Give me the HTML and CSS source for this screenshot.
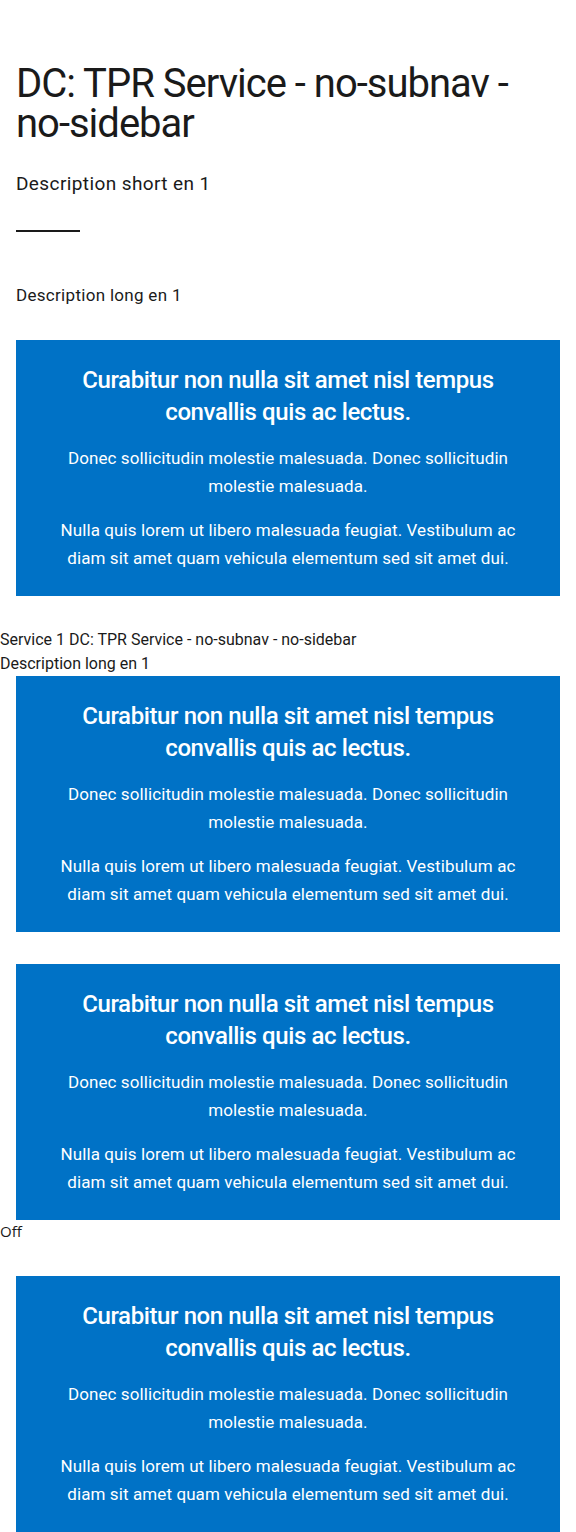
FILE: index.html
```html
<!DOCTYPE html>
<html lang="en">
<head>
<meta charset="utf-8">
<title>DC: TPR Service - no-subnav - no-sidebar</title>
<link rel="stylesheet" href="styles.css">
</head>
<body>
<main class="page">
  <header class="intro">
    <h1 class="title">DC: TPR Service - no-subnav - no-sidebar</h1>
    <p class="lead">Description short en 1</p>
    <hr class="rule">
    <p class="long">Description long en 1</p>
  </header>

  <section class="cta-wrap">
    <div class="cta">
      <h2 class="cta-title">Curabitur non nulla sit amet nisl tempus convallis quis ac lectus.</h2>
      <p class="cta-text">Donec sollicitudin molestie malesuada. Donec sollicitudin molestie malesuada.</p>
      <p class="cta-text">Nulla quis lorem ut libero malesuada feugiat. Vestibulum ac diam sit amet quam vehicula elementum sed sit amet dui.</p>
    </div>
  </section>

  <div class="raw">
    <div class="raw-line">Service 1 DC: TPR Service - no-subnav - no-sidebar</div>
    <div class="raw-line">Description long en 1</div>
  </div>

  <section class="cta-wrap flush">
    <div class="cta">
      <h2 class="cta-title">Curabitur non nulla sit amet nisl tempus convallis quis ac lectus.</h2>
      <p class="cta-text">Donec sollicitudin molestie malesuada. Donec sollicitudin molestie malesuada.</p>
      <p class="cta-text">Nulla quis lorem ut libero malesuada feugiat. Vestibulum ac diam sit amet quam vehicula elementum sed sit amet dui.</p>
    </div>
  </section>

  <section class="cta-wrap">
    <div class="cta">
      <h2 class="cta-title">Curabitur non nulla sit amet nisl tempus convallis quis ac lectus.</h2>
      <p class="cta-text">Donec sollicitudin molestie malesuada. Donec sollicitudin molestie malesuada.</p>
      <p class="cta-text">Nulla quis lorem ut libero malesuada feugiat. Vestibulum ac diam sit amet quam vehicula elementum sed sit amet dui.</p>
    </div>
  </section>

  <div class="off">Off</div>

  <section class="cta-wrap">
    <div class="cta">
      <h2 class="cta-title">Curabitur non nulla sit amet nisl tempus convallis quis ac lectus.</h2>
      <p class="cta-text">Donec sollicitudin molestie malesuada. Donec sollicitudin molestie malesuada.</p>
      <p class="cta-text">Nulla quis lorem ut libero malesuada feugiat. Vestibulum ac diam sit amet quam vehicula elementum sed sit amet dui.</p>
    </div>
  </section>
</main>
</body>
</html>
```

FILE: styles.css
```css
html, body {
  margin: 0;
  padding: 0;
  background: #ffffff;
}

body {
  font-family: Roboto, "Liberation Sans", Arial, sans-serif;
  color: #1a1a1a;
}

.page {
  display: block;
}

.intro {
  padding: 64px 16px 0;
}

.title {
  margin: 0;
  font-size: 40px;
  line-height: 40px;
  font-weight: 400;
  letter-spacing: -1px;
}

.lead {
  margin: 28px 0 0;
  font-size: 19px;
  line-height: 24px;
  letter-spacing: 0.4px;
}

.rule {
  width: 64px;
  height: 2px;
  margin: 34px 0 0;
  border: 0;
  background: #1a1a1a;
}

.long {
  margin: 51px 0 0;
  font-size: 17px;
  line-height: 24px;
  letter-spacing: 0.3px;
}

.cta-wrap {
  padding: 33px 16px 0;
}

.cta-wrap.flush {
  padding-top: 0;
}

.cta-wrap + .cta-wrap {
  padding-top: 32px;
}

.cta {
  background: #0072c6;
  color: #ffffff;
  padding: 24px 40px;
  text-align: center;
}

.cta-title {
  margin: 0;
  font-size: 24px;
  line-height: 32px;
  font-weight: 500;
  letter-spacing: -0.4px;
}

.cta-text {
  margin: 16px 0 0;
  font-size: 17px;
  line-height: 28px;
  letter-spacing: 0.1px;
}

.raw {
  padding-top: 32px;
  font-size: 16px;
  line-height: 24px;
}

.off {
  font-family: "Open Sans", sans-serif;
  font-size: 15px;
  line-height: 22px;
  margin-bottom: 34px;
}

.off + .cta-wrap {
  padding-top: 0;
}
```
